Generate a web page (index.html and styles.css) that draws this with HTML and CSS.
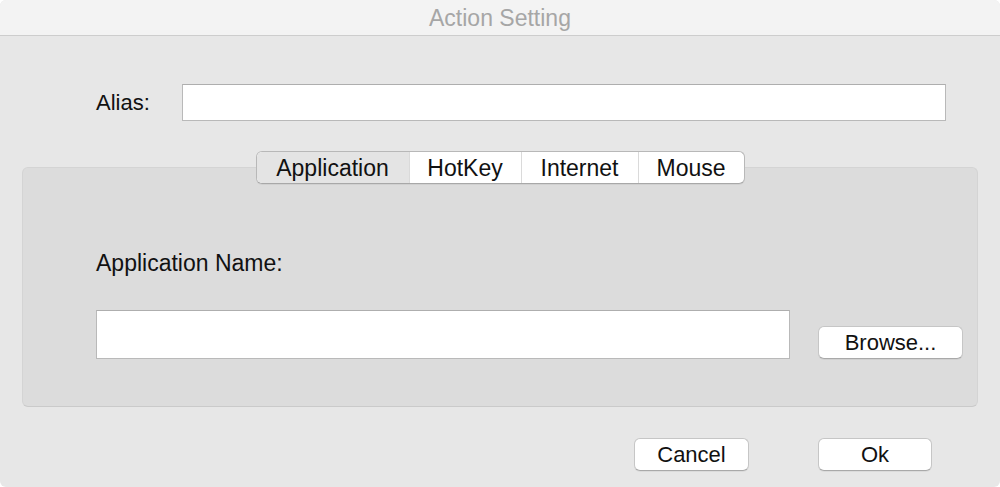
FILE: index.html
```html
<!DOCTYPE html>
<html>
<head>
<meta charset="utf-8">
<link rel="stylesheet" href="styles.css">
</head>
<body>
<div class="window">
  <div class="titlebar">Action Setting</div>
  <div class="content">
    <div class="alias-row">
      <label class="alias-label">Alias:</label>
      <div class="field alias-field"></div>
    </div>
    <div class="tabs-wrap">
      <div class="segmented">
        <div class="seg seg-app selected">Application</div>
        <div class="seg seg-hot">HotKey</div>
        <div class="seg seg-net">Internet</div>
        <div class="seg seg-mouse">Mouse</div>
      </div>
    </div>
    <div class="group">
      <div class="group-label">Application Name:</div>
      <div class="app-row">
        <div class="field app-field"></div>
        <button class="btn browse">Browse...</button>
      </div>
    </div>
    <div class="footer">
      <button class="btn cancel">Cancel</button>
      <button class="btn ok">Ok</button>
    </div>
  </div>
</div>
</body>
</html>
```

FILE: styles.css
```css
html, body {
  margin: 0;
  padding: 0;
  background: #ffffff;
}
body {
  width: 1000px;
  height: 487px;
  overflow: hidden;
  font-family: "Liberation Sans", Arial, sans-serif;
  color: #111;
}
.window {
  width: 1000px;
  height: 487px;
  box-sizing: border-box;
  border-radius: 6px;
  overflow: hidden;
  background: #e7e7e7;
  display: flex;
  flex-direction: column;
}
.titlebar {
  height: 35px;
  border-bottom: 1px solid #cdcdcd;
  background: #f3f3f3;
  color: #a6a6a6;
  font-size: 23px;
  line-height: 37px;
  text-align: center;
}
.content {
  flex: 1;
  display: flex;
  flex-direction: column;
  padding: 48px 22px 0 22px;
}
.alias-row {
  display: flex;
  align-items: center;
  height: 37px;
}
.alias-label {
  font-size: 22px;
  width: 86px;
  margin-left: 74px;
}
.field {
  background: #ffffff;
  border: 1px solid #b9b9b9;
  border-top-color: #aeaeae;
  box-sizing: border-box;
}
.alias-field {
  width: 764px;
  height: 37px;
}
.tabs-wrap {
  display: flex;
  justify-content: center;
  margin-top: 30px;
  margin-bottom: -17px;
  position: relative;
  z-index: 1;
}
.segmented {
  display: flex;
  height: 33px;
  box-sizing: border-box;
  border: 1px solid #b8b8b8;
  border-bottom-color: #a8a8a8;
  border-radius: 6px;
  background: #ffffff;
  overflow: hidden;
  box-shadow: 0 1px 0 rgba(0, 0, 0, 0.05);
}
.seg {
  font-size: 23px;
  line-height: 33px;
  text-align: center;
  border-left: 1px solid #dadada;
  box-sizing: border-box;
}
.seg:first-child { border-left: none; }
.seg.selected { background: #e4e4e4; }
.seg-app { width: 152px; }
.seg-hot { width: 112px; }
.seg-net { width: 117px; }
.seg-mouse { width: 106px; }
.group {
  height: 240px;
  box-sizing: border-box;
  background: #dcdcdc;
  border: 1px solid #d4d4d4;
  border-bottom-color: #cacaca;
  border-radius: 6px;
  padding: 82px 14px 0 73px;
}
.group-label {
  font-size: 23px;
  line-height: 26px;
}
.app-row {
  display: flex;
  align-items: flex-end;
  margin-top: 34px;
}
.app-field {
  width: 694px;
  height: 49px;
}
.btn {
  font-family: "Liberation Sans", Arial, sans-serif;
  font-size: 22px;
  color: #111;
  background: #ffffff;
  border: 1px solid #c6c6c6;
  border-bottom-color: #a9a9a9;
  border-radius: 6px;
  height: 33px;
  padding: 0;
  line-height: 31px;
  box-sizing: border-box;
  box-shadow: 0 1px 0 rgba(0, 0, 0, 0.05);
}
.browse {
  width: 145px;
  margin-left: 28px;
}
.footer {
  display: flex;
  justify-content: flex-end;
  margin-top: 31px;
  padding-right: 46px;
}
.cancel { width: 115px; }
.ok { width: 114px; margin-left: 69px; }
```
